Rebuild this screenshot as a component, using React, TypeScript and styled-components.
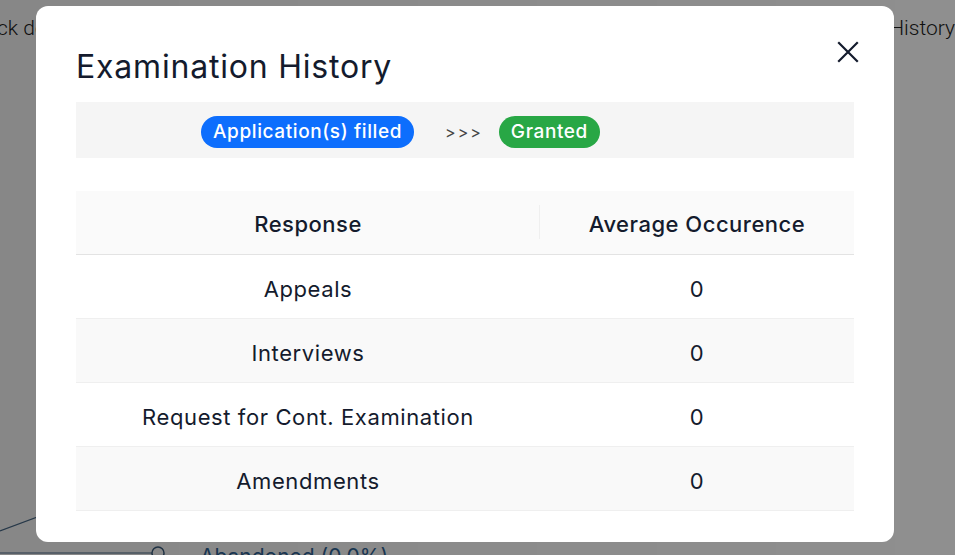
import React from 'react'
import styled, { createGlobalStyle } from 'styled-components'

const GlobalStyle = createGlobalStyle`
  html, body {
    margin: 0;
    padding: 0;
    width: 955px;
    height: 555px;
    overflow: hidden;
    background: #ffffff;
    font-family: Inter, "Open Sans", "Liberation Sans", sans-serif;
  }
`

const rows = [
  { name: 'Appeals', value: 0 },
  { name: 'Interviews', value: 0 },
  { name: 'Request for Cont. Examination', value: 0 },
  { name: 'Amendments', value: 0 },
]

export default function App() {
  return (
    <>
      <GlobalStyle />
      <Page>
        <TopLine>
          <BgText>ck details</BgText>
          <BgText $right>History</BgText>
        </TopLine>
        <Filler />
        <ChartFoot>
          <svg width="190" height="60" viewBox="0 0 190 60">
            <path d="M0 14 L40 -1" stroke="#4a6b8a" strokeWidth="1.2" fill="none" />
            <path d="M0 36 L152 36" stroke="#4a6b8a" strokeWidth="1.2" fill="none" />
            <circle cx="158" cy="36" r="6" stroke="#3d5f80" strokeWidth="1.5" fill="#fff" />
          </svg>
          <LegendText>Abandoned (0.0%)</LegendText>
        </ChartFoot>
      </Page>

      <Overlay>
        <Modal>
          <ModalHead>
            <Title>Examination History</Title>
            <CloseButton aria-label="close">
              <svg width="22" height="22" viewBox="0 0 22 22">
                <path d="M2 2 L20 20 M20 2 L2 20" stroke="#141b2d" strokeWidth="2.2" strokeLinecap="square" />
              </svg>
            </CloseButton>
          </ModalHead>

          <StatusBar>
            <Pill $bg="#0d6efd">Application(s) filled</Pill>
            <Arrows>&gt;&gt;&gt;</Arrows>
            <Pill $bg="#28a745">Granted</Pill>
          </StatusBar>

          <Table>
            <thead>
              <tr>
                <Th $divider>Response</Th>
                <Th>Average Occurence</Th>
              </tr>
            </thead>
            <tbody>
              {rows.map((r, i) => (
                <Tr key={r.name} $striped={i % 2 === 1}>
                  <Td>{r.name}</Td>
                  <Td>{r.value}</Td>
                </Tr>
              ))}
            </tbody>
          </Table>
        </Modal>
      </Overlay>
    </>
  )
}

const Page = styled.div`
  width: 955px;
  height: 555px;
  display: flex;
  flex-direction: column;
  overflow: hidden;
`
const TopLine = styled.div`
  display: flex;
  padding-top: 16px;
  margin-left: -3px;
  margin-right: 0;
`
const BgText = styled.span<{ $right?: boolean }>`
  margin-left: ${({ $right }) => ($right ? 'auto' : '0')};
  font-family: Roboto, "Liberation Sans", sans-serif;
  font-size: 21px;
  font-weight: 300;
  color: #1c1c1c;
`
const Filler = styled.div`
  flex: 1;
`
const ChartFoot = styled.div`
  display: flex;
  align-items: flex-end;
  height: 60px;
  margin-bottom: -22px;
`
const LegendText = styled.span`
  margin-left: 10px;
  font-size: 21px;
  color: #2f6497;
  line-height: 40px;
`
const Overlay = styled.div`
  position: fixed;
  inset: 0;
  background: linear-gradient(90deg, rgba(0, 0, 0, 0.47), rgba(0, 0, 0, 0.44));
  padding: 6px 0 0 36px;
`
const Modal = styled.div`
  width: 858px;
  height: 536px;
  box-sizing: border-box;
  background: #ffffff;
  border-radius: 12px;
  padding: 0 40px;
  display: flex;
  flex-direction: column;
`
const ModalHead = styled.div`
  display: flex;
  justify-content: space-between;
  align-items: flex-start;
  height: 96px;
`
const Title = styled.h2`
  margin: 41px 0 0;
  font-size: 32px;
  font-weight: 400;
  color: #141b2d;
  letter-spacing: 0.8px;
`
const CloseButton = styled.button`
  margin: 35px -5px 0 0;
  padding: 0;
  border: none;
  background: none;
  width: 22px;
  height: 22px;
  cursor: pointer;
`
const StatusBar = styled.div`
  display: flex;
  align-items: center;
  height: 56px;
  background: #f5f5f5;
  padding-left: 125px;
`
const Pill = styled.span<{ $bg: string }>`
  display: inline-flex;
  align-items: center;
  height: 32px;
  padding: 0 12px;
  border-radius: 16px;
  background: ${({ $bg }) => $bg};
  color: #ffffff;
  font-size: 19px;
  font-weight: 500;
  letter-spacing: 0.6px;
  margin-top: 3px;
`
const Arrows = styled.span`
  margin: 3px 16px 0 31px;
  font-size: 16px;
  letter-spacing: 2px;
  color: #444;
`
const Table = styled.table`
  margin-top: 33px;
  width: 100%;
  border-collapse: collapse;
  table-layout: fixed;
  color: #141b2d;
  font-size: 22px;
  letter-spacing: 0.6px;
`
const Th = styled.th<{ $divider?: boolean }>`
  position: relative;
  height: 63px;
  padding: 3px 0 0;
  box-sizing: border-box;
  background: #fafafa;
  font-weight: 500;
  letter-spacing: 0.5px;
  text-align: center;
  border-bottom: 1px solid #e3e3e3;
  width: ${({ $divider }) => ($divider ? '464px' : 'auto')};

  &::after {
    content: '';
    display: ${({ $divider }) => ($divider ? 'block' : 'none')};
    position: absolute;
    right: 0;
    top: 14px;
    height: 34px;
    width: 1px;
    background: #efefef;
  }
`
const Tr = styled.tr<{ $striped: boolean }>`
  background: ${({ $striped }) => ($striped ? '#f9f9f9' : '#ffffff')};
`
const Td = styled.td`
  height: 64px;
  padding: 5px 0 0;
  box-sizing: border-box;
  text-align: center;
  border-bottom: 1px solid #efefef;
  font-weight: 400;
`
